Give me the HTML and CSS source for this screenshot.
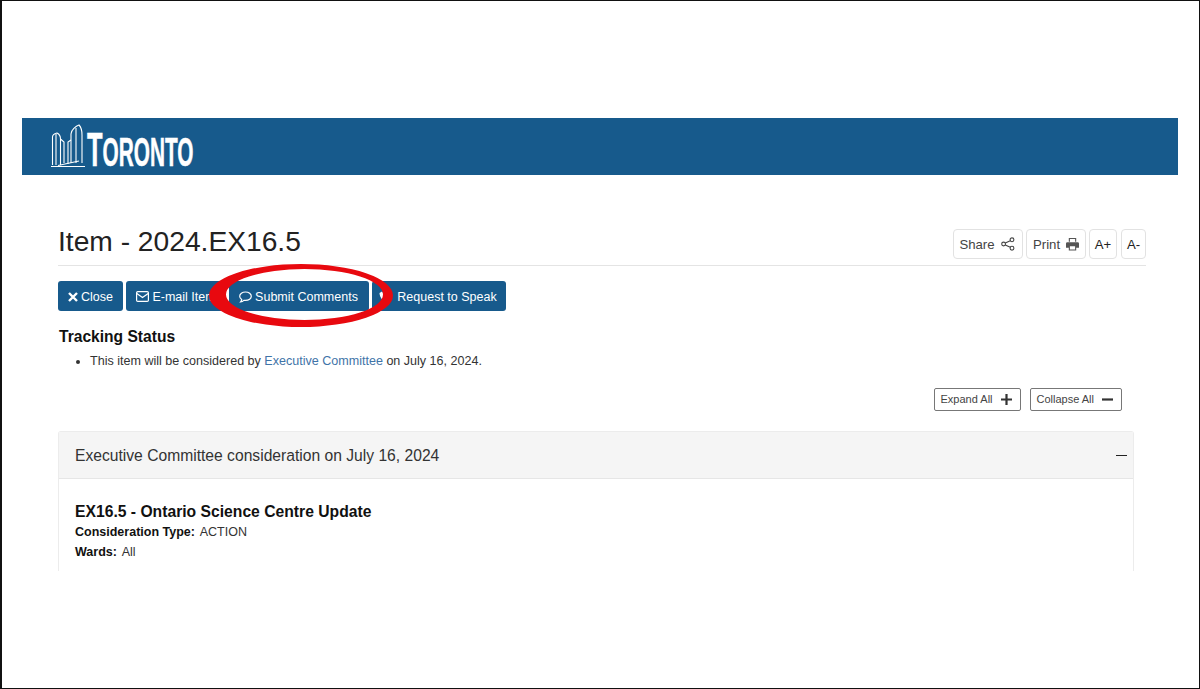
FILE: index.html
```html
<!DOCTYPE html>
<html lang="en">
<head>
	<meta charset="UTF-8">
	<title>Item - 2024.EX16.5</title>
	<link rel="stylesheet" href="styles.css">
</head>
<body>
	<div class="frame">
		<!-- header -->
		<div class="banner">
			<svg class="logo-mark" viewBox="0 0 34 44" width="34" height="44" fill="none" stroke="#fff" stroke-width="1.1">
				<path d="M1.5 41V13C1.5 11 4 9.5 6 9C8 10 9.5 12 9.5 15V41"/>
				<path d="M5 41V10"/>
				<path d="M9.5 15L13 18V39M17 40V18L20 16"/>
				<path d="M20 39V10C20 6 25 2 28 1C30 3 31 7 31 11V39"/>
				<path d="M25 39V4"/>
				<path d="M0 42.5H34"/>
				<path d="M7 41.5L28 37"/>
			</svg>
			<span class="logo-text"><span class="logo-cap">T</span>ORONTO</span>
		</div>

		<div class="page">
			<div class="title-row">
				<h1>Item - 2024.EX16.5</h1>
				<div class="tools">
					<a class="tool tool-share">Share
						<svg viewBox="0 0 14 14" width="14" height="14" fill="none" stroke="#444" stroke-width="1.1">
							<circle cx="2.6" cy="7" r="1.9"/>
							<circle cx="11" cy="2.8" r="1.9"/>
							<circle cx="11" cy="11.2" r="1.9"/>
							<path d="M4.3 6.1L9.3 3.7M4.3 7.9L9.3 10.3"/>
						</svg>
					</a>
					<a class="tool tool-print">Print
						<svg viewBox="0 0 14 14" width="13" height="13" fill="#555">
							<path d="M3 0H11V4H3ZM4.2 1.2V4H9.8V1.2Z" fill-rule="evenodd"/>
							<path d="M1.5 4.5H12.5A1.5 1.5 0 0 1 14 6V10.5H11V13.5H3V10.5H0V6A1.5 1.5 0 0 1 1.5 4.5ZM4.2 9V12.3H9.8V9Z" fill-rule="evenodd"/>
						</svg>
					</a>
					<a class="tool tool-size">A+</a>
					<a class="tool tool-size">A-</a>
				</div>
			</div>

			<div class="actions">
				<a class="btn btn-close">
					<svg viewBox="0 0 10 10" width="10" height="10" stroke="#fff" stroke-width="2.4"><path d="M1 1L9 9M9 1L1 9"/></svg>
					Close
				</a>
				<a class="btn btn-mail">
					<svg viewBox="0 0 13 11" width="13" height="11" fill="none" stroke="#fff" stroke-width="1.2"><rect x="0.6" y="0.6" width="11.8" height="9.8" rx="1.2"/><path d="M0.8 2.6L6.5 6.6L12.2 2.6"/></svg>
					E-mail Item
				</a>
				<a class="btn btn-submit">
					<svg viewBox="0 0 13 12" width="13" height="12" fill="none" stroke="#fff" stroke-width="1.2"><path d="M6.5 1C3.2 1 0.7 2.9 0.7 5.2C0.7 6.5 1.5 7.6 2.7 8.4C2.6 9.3 2.2 10.2 1.6 10.9C2.9 10.8 4 10.2 4.8 9.3C5.3 9.4 5.9 9.4 6.5 9.4C9.8 9.4 12.3 7.5 12.3 5.2C12.3 2.9 9.8 1 6.5 1Z"/></svg>
					Submit Comments
				</a>
				<a class="btn btn-speak">
					<svg viewBox="0 0 12 12" width="12" height="12" fill="#fff"><path d="M3 0.5L5 3.5L3.8 5C4.4 6.4 5.5 7.6 7 8.2L8.5 7L11.5 9L10 11.5C5 11.5 0.5 7 0.5 2Z"/></svg>
					Request to Speak
				</a>
			</div>

			<h2 class="status-title">Tracking Status</h2>
			<ul class="status-list">
				<li>This item will be considered by <a class="link">Executive Committee</a> on July 16, 2024.</li>
			</ul>

			<div class="expand-row">
				<a class="outline">Expand All <span class="outline-sign">
					<svg viewBox="0 0 11 11" width="11" height="11" stroke="#333" stroke-width="2.2"><path d="M5.5 0V11M0 5.5H11"/></svg>
				</span></a>
				<a class="outline">Collapse All <span class="outline-sign">
					<svg viewBox="0 0 11 11" width="11" height="11" stroke="#333" stroke-width="2.2"><path d="M0 5.5H11"/></svg>
				</span></a>
			</div>

			<div class="panel">
				<div class="panel-head">
					<span>Executive Committee consideration on July 16, 2024</span>
					<span class="panel-dash"></span>
				</div>
				<div class="panel-body">
					<h3>EX16.5 - Ontario Science Centre Update</h3>
					<p><b>Consideration Type:</b> ACTION</p>
					<p class="wards"><b>Wards:</b> All</p>
				</div>
			</div>
		</div>

		<!-- red marker round the button -->
		<svg class="marker" viewBox="0 0 195 72" width="195" height="72">
			<path fill="#e8090f" fill-rule="evenodd" d="M4 35.5a92 31.5 0 1 0 184 0a92 31.5 0 1 0 -184 0ZM21 34.5a78.5 25.5 0 1 0 157 0a78.5 25.5 0 1 0 -157 0Z"/>
		</svg>
	</div>
</body>
</html>
```
FILE: styles.css
```css
* {
	margin: 0;
	padding: 0;
	box-sizing: border-box;
}
body {
	font-family: "Liberation Sans", Arial, sans-serif;
	background-color: white;
	color: #222;
}
.frame {
	position: relative;
	width: 1200px;
	height: 689px;
	border: 1px solid #111;
	border-left-width: 2px;
	padding: 117px 21px 0 20px;
	overflow: hidden;
}
.banner {
	display: flex;
	align-items: flex-end;
	height: 57px;
	padding: 0 0 0 29px;
	background-color: #175a8c;
	color: white;
}
.logo-mark {
	margin: 0 2px 7px 0;
	flex: none;
}
.logo-text {
	display: block;
	font-size: 40px;
	font-weight: bold;
	line-height: 40px;
	white-space: nowrap;
	transform: scaleX(0.52);
	transform-origin: left center;
	-webkit-text-stroke: 0.5px white;
	margin-bottom: 3px;
}
.logo-cap {
	font-size: 49px;
}
.page {
	padding: 0 32px 0 36px;
}
.title-row {
	display: flex;
	justify-content: space-between;
	align-items: center;
	height: 91px;
	padding: 47px 0 0;
	margin-bottom: 15px;
	border-bottom: 1px solid #e4e4e4;
}
h1 {
	font-size: 28.2px;
	font-weight: normal;
	color: #222;
	margin-top: -4px;
}
.tools {
	display: flex;
	gap: 3px;
}
.tool {
	display: flex;
	align-items: center;
	justify-content: center;
	gap: 6px;
	height: 30px;
	padding-top: 1px;
	border: 1px solid #e2e2e2;
	border-radius: 4px;
	font-size: 13.2px;
	color: #444;
	background-color: white;
}
.tool-share {
	width: 70px;
	padding-right: 2px;
}
.tool-print {
	width: 60px;
}
.tool-size {
	width: 28px;
	color: #222;
}
.tool-size:last-child {
	width: 25px;
	margin-left: 1px;
}
.actions {
	display: flex;
	gap: 3px;
}
.btn {
	display: flex;
	align-items: center;
	justify-content: center;
	gap: 3px;
	height: 30px;
	padding-top: 1px;
	border-radius: 3px;
	background-color: #175a8c;
	color: white;
	font-size: 12.5px;
	white-space: nowrap;
}
.btn-close {
	width: 65px;
}
.btn-mail {
	width: 100px;
}
.btn-submit {
	width: 140px;
	padding-right: 1px;
}
.btn-speak {
	width: 134px;
	gap: 6px;
	padding-right: 2px;
}
.status-title {
	font-size: 15.6px;
	font-weight: bold;
	color: #111;
	margin: 17px 0 0 1px;
	line-height: 18px;
}
.status-list {
	margin: 6px 0 0 32px;
	font-size: 12.56px;
	line-height: 18px;
	color: #333;
}
.link {
	color: #3f74a8;
}
.expand-row {
	display: flex;
	justify-content: flex-end;
	gap: 9px;
	margin: 18px 24px 0 0;
}
.outline {
	display: flex;
	align-items: center;
	gap: 8px;
	height: 23px;
	padding: 0 8px 1px 6px;
	border: 1px solid #777;
	border-radius: 2px;
	font-size: 11px;
	color: #444;
}
.outline-sign {
	display: flex;
}
.panel {
	width: 1076px;
	margin-top: 20px;
	height: 140px;
	border: 1px solid #ececec;
	border-bottom: none;
	border-radius: 3px 3px 0 0;
}
.panel-head {
	display: flex;
	justify-content: space-between;
	align-items: center;
	height: 47px;
	padding: 1px 6px 0 16px;
	background-color: #f5f5f5;
	border-bottom: 1px solid #e6e6e6;
	font-size: 15.65px;
	color: #333;
}
.panel-dash {
	display: block;
	width: 11px;
	height: 1px;
	background-color: #222;
}
.panel-body {
	padding: 24px 16px 0;
	font-size: 12.5px;
	color: #333;
}
.panel-body h3 {
	font-size: 15.7px;
	line-height: 18px;
	color: #111;
	margin-bottom: 2px;
}
.panel-body p {
	line-height: 18px;
}
.panel-body b {
	color: #111;
	margin-right: 2px;
}
.wards {
	margin-top: 2px;
}
.marker {
	position: absolute;
	left: 203px;
	top: 259px;
}
```
